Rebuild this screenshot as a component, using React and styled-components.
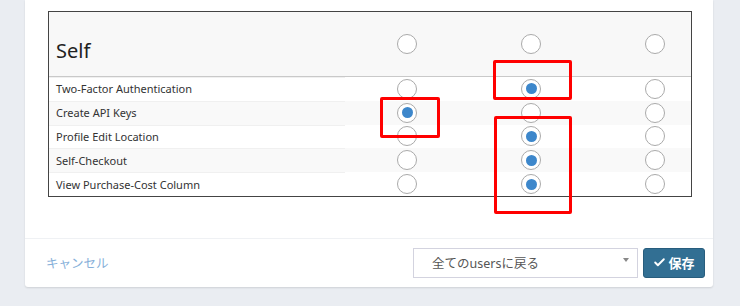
import React from 'react';
import styled, { createGlobalStyle } from 'styled-components';
import { Check } from 'lucide-react';

const GlobalStyle = createGlobalStyle`
  html, body {
    margin: 0;
    padding: 0;
    background: #eaedf2;
    font-family: "Noto Sans", "Noto Sans CJK JP", sans-serif;
  }
`;

const Page = styled.div`
  position: relative;
  width: 740px;
  height: 306px;
  overflow: hidden;
`;

const Card = styled.div`
  margin-left: 25px;
  width: 688px;
  background: #fff;
  border-radius: 0 0 3px 3px;
  box-shadow: 0 1px 2px rgba(0, 0, 0, 0.12);
`;

const CardBody = styled.div`
  padding: 11px 21px 41px 23px;
  border-bottom: 1px solid #eff1f4;
`;

const Table = styled.div`
  border: 1px solid #444;
  display: grid;
  grid-template-columns: 296px 124px 124px 1fr;
`;

const Row = styled.div`
  display: contents;
`;

const Cell = styled.div`
  height: ${(p) => (p.$head ? '65px' : '23.8px')};
  background: ${(p) => (p.$head ? '#f8f8f8' : p.$odd ? '#f9f9f9' : '#fff')};
  border-bottom: ${(p) => (p.$head ? '1px solid #c9c9c9' : 'none')};
  display: flex;
  align-items: center;
  justify-content: ${(p) => (p.$last ? 'flex-start' : 'center')};
  padding-left: ${(p) => (p.$last ? '52px' : '0')};
  box-sizing: border-box;
`;

const LabelCell = styled(Cell)`
  justify-content: flex-start;
  padding-left: 7px;
  color: #333;
  font-size: 11px;
  box-shadow: ${(p) => (p.$head ? 'none' : 'inset 0 1px 0 #f0f0f0')};
`;

const HeadTitle = styled.div`
  font-size: 20px;
  color: #222;
  align-self: flex-end;
  margin-bottom: 12px;
`;

const Radio = styled.span`
  width: 20px;
  height: 20px;
  box-sizing: border-box;
  border-radius: 50%;
  border: 1.5px solid #aaa;
  background: #fff;
  display: flex;
  align-items: center;
  justify-content: center;
  &::after {
    content: '';
    width: 11px;
    height: 11px;
    border-radius: 50%;
    background: ${(p) => (p.$checked ? '#3d87cb' : 'transparent')};
  }
`;

const Footer = styled.div`
  height: 48px;
  display: flex;
  align-items: center;
  padding: 0 8px 0 21px;
`;

const CancelLink = styled.a`
  color: #86afd9;
  font-size: 12.5px;
  text-decoration: none;
  margin-right: auto;
`;

const Select = styled.div`
  width: 225px;
  height: 30px;
  box-sizing: border-box;
  border: 1px solid #d3d3df;
  display: flex;
  align-items: center;
  padding: 0 8px 0 18px;
  color: #555;
  font-size: 12.5px;
`;

const SelectText = styled.span`
  flex: 1;
`;

const Caret = styled.span`
  width: 0;
  height: 0;
  border-left: 3.5px solid transparent;
  border-right: 3.5px solid transparent;
  border-top: 4px solid #888;
  margin-top: -6px;
`;

const SaveButton = styled.button`
  margin-left: 5px;
  width: 62px;
  height: 30px;
  background: #326f93;
  border: 1px solid #285d7d;
  border-radius: 3px;
  color: #fff;
  font-family: inherit;
  font-size: 13px;
  font-weight: 700;
  display: flex;
  align-items: center;
  justify-content: center;
  gap: 2px;
  padding: 0;
`;

const Mark = styled.div`
  position: absolute;
  box-sizing: border-box;
  border: 3px solid #ff0000;
  border-radius: 2px;
`;

const rows = [
  { label: 'Two-Factor Authentication', checked: 1 },
  { label: 'Create API Keys', checked: 0 },
  { label: 'Profile Edit Location', checked: 1 },
  { label: 'Self-Checkout', checked: 1 },
  { label: 'View Purchase-Cost Column', checked: 1 },
];

const marks = [
  { left: 493, top: 60, width: 79, height: 40 },
  { left: 380, top: 97, width: 60, height: 41 },
  { left: 494, top: 116, width: 78, height: 98 },
];

export default function App() {
  return (
    <Page>
      <GlobalStyle />
      <Card>
        <CardBody>
          <Table>
            <Row>
              <LabelCell $head>
                <HeadTitle>Self</HeadTitle>
              </LabelCell>
              {[0, 1, 2].map((i) => (
                <Cell key={i} $head $last={i === 2}>
                  <Radio />
                </Cell>
              ))}
            </Row>
            {rows.map((r, idx) => (
              <Row key={r.label}>
                <LabelCell $odd={idx % 2 === 1}>{r.label}</LabelCell>
                {[0, 1, 2].map((i) => (
                  <Cell key={i} $odd={idx % 2 === 1} $last={i === 2}>
                    <Radio $checked={r.checked === i} />
                  </Cell>
                ))}
              </Row>
            ))}
          </Table>
        </CardBody>
        <Footer>
          <CancelLink href="#">キャンセル</CancelLink>
          <Select>
            <SelectText>全てのusersに戻る</SelectText>
            <Caret />
          </Select>
          <SaveButton>
            <Check size={13} strokeWidth={3.5} />
            保存
          </SaveButton>
        </Footer>
      </Card>
      {marks.map((m, i) => (
        <Mark key={i} style={m} />
      ))}
    </Page>
  );
}
